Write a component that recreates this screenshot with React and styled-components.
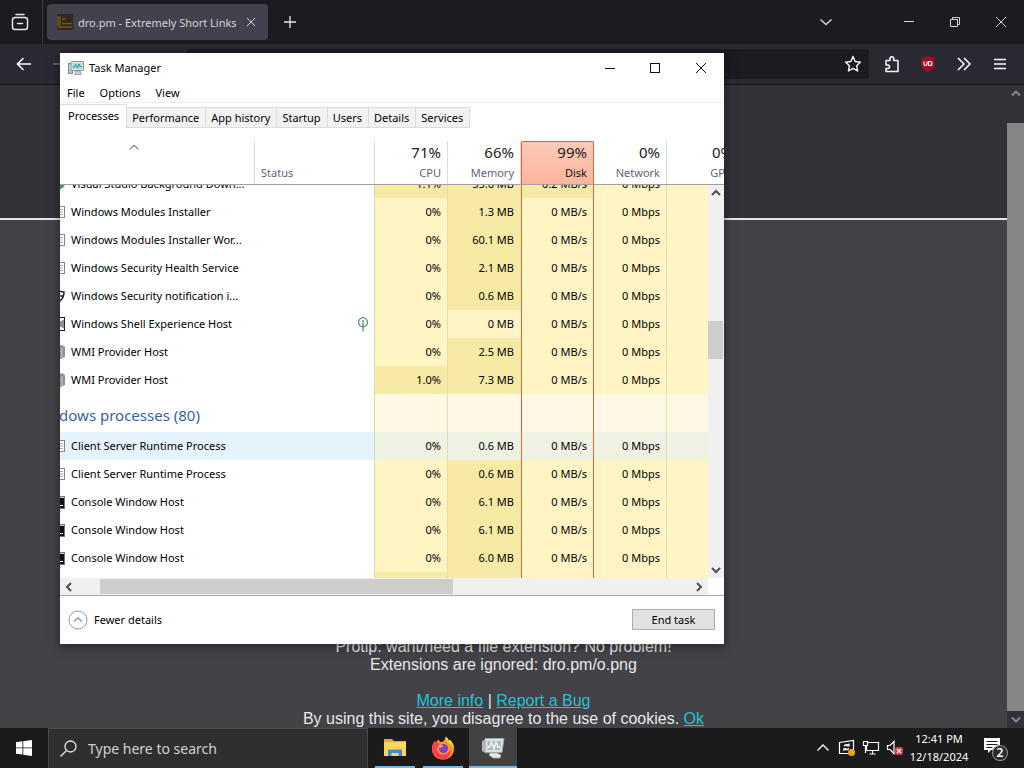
import React, { useLayoutEffect, useRef } from "react";
import styled, { createGlobalStyle, css } from "styled-components";

const GlobalStyle = createGlobalStyle`
  * {
    box-sizing: border-box;
  }
  body {
    margin: 0;
    font-family: "Noto Sans", "Open Sans", sans-serif;
    font-size: 11px;
    background-color: #434247;
  }
  button {
    font: inherit;
    color: inherit;
    border: 0;
    padding: 0;
    background: none;
  }
`;

const SCROLL_LEFT = 30;
const SCROLL_TOP = 15;

const columns = [
  { key: "cpu", total: "71%", title: "CPU" },
  { key: "memory", total: "66%", title: "Memory" },
  { key: "disk", total: "99%", title: "Disk", hot: true },
  { key: "network", total: "0%", title: "Network" },
  { key: "gpu", total: "0%", title: "GPU" },
];

const appRows = [
  { name: "Visual Studio Background Down...", icon: "vs", cpu: "1.1%", memory: "55.6 MB", disk: "0.2 MB/s" },
  { name: "Windows Modules Installer", icon: "exe", memory: "1.3 MB" },
  { name: "Windows Modules Installer Wor...", icon: "exe", memory: "60.1 MB" },
  { name: "Windows Security Health Service", icon: "exe", memory: "2.1 MB" },
  { name: "Windows Security notification i...", icon: "shield", memory: "0.6 MB" },
  { name: "Windows Shell Experience Host", icon: "shell", memory: "0 MB", leaf: true },
  { name: "WMI Provider Host", icon: "wmi", memory: "2.5 MB" },
  { name: "WMI Provider Host", icon: "wmi", cpu: "1.0%", memory: "7.3 MB" },
];

const systemRows = [
  { name: "Client Server Runtime Process", icon: "exe", memory: "0.6 MB", hover: true },
  { name: "Client Server Runtime Process", icon: "exe", memory: "0.6 MB" },
  { name: "Console Window Host", icon: "console", memory: "6.1 MB" },
  { name: "Console Window Host", icon: "console", memory: "6.1 MB" },
  { name: "Console Window Host", icon: "console", memory: "6.0 MB" },
  { name: "Console Window Host", icon: "console", cpu: "0.1%", memory: "6.0 MB" },
];

const tabs = ["Processes", "Performance", "App history", "Startup", "Users", "Details", "Services"];

const Desktop = styled.div`
  position: relative;
  display: flex;
  flex-direction: column;
  min-height: 100vh;
  overflow: hidden;
`;

/* ---------- browser ---------- */

const Browser = styled.div`
  flex: 1;
  display: flex;
  flex-direction: column;
  color: #fbfbfe;
`;

const TabStrip = styled.div`
  display: flex;
  align-items: center;
  height: 44px;
  background-color: #1c1b22;
`;

const FirefoxView = styled.button`
  display: flex;
  align-items: center;
  justify-content: center;
  width: 43px;
  height: 44px;
  padding-right: 2px;
  border-right: 1px solid #3a3942;
`;

const BrowserTab = styled.div`
  display: flex;
  align-items: center;
  width: 221px;
  height: 36px;
  margin-left: 4px;
  padding: 0 10px;
  border-radius: 4px;
  background-color: #42414d;
  color: #d5d4da;
  svg {
    flex: none;
  }
  span {
    flex: 1;
    margin-left: 5px;
    white-space: nowrap;
  }
`;

const IconButton = styled.button`
  display: flex;
  align-items: center;
  justify-content: center;
  flex: none;
  width: ${(props) => props.$width || 36}px;
  height: 36px;
`;

const Spacer = styled.div`
  flex: 1;
`;

const ListTabsButton = styled(IconButton)`
  margin-right: 42px;
`;

const Toolbar = styled.div`
  display: flex;
  align-items: center;
  height: 41px;
  padding: 0 6px;
  background-color: #2b2a33;
  border-bottom: 1px solid #121117;
`;

const UrlBar = styled.div`
  flex: 1;
  display: flex;
  justify-content: flex-end;
  align-items: center;
  height: 30px;
  margin: 0 5px 0 108px;
  border-radius: 4px;
  background-color: #1c1b22;
`;

const Viewport = styled.div`
  flex: 1;
  display: flex;
`;

const WebPage = styled.main`
  flex: 1;
  display: flex;
  flex-direction: column;
  background-color: #434247;
  font-family: "Liberation Sans", Arial, sans-serif;
  font-size: 16px;
  line-height: 18px;
  color: #e8e8ea;
  text-align: center;
`;

const Hero = styled.header`
  height: 135px;
  background-color: #333238;
  border-bottom: 2px solid #e4e4e4;
`;

const PageFooter = styled.footer`
  margin-top: auto;
  p {
    margin: 0 0 18px;
  }
  p:last-child {
    margin: 0;
  }
  a {
    color: #22c3d6;
  }
`;

const PageScrollbar = styled.div`
  display: flex;
  flex-direction: column;
  align-items: center;
  width: 17px;
  background-color: #323137;
  svg {
    flex: none;
    height: 17px;
  }
`;

const PageThumb = styled.div`
  flex: 1;
  width: 100%;
  margin-top: 21px;
  background-color: #868686;
`;

/* ---------- task manager ---------- */

const Window = styled.section`
  position: absolute;
  left: 60px;
  top: 53px;
  width: 664px;
  display: flex;
  flex-direction: column;
  background-color: #fff;
  color: #000;
  box-shadow: 0 2px 10px rgba(0, 0, 0, 0.5);
`;

const TitleBar = styled.header`
  display: flex;
  align-items: center;
  height: 29px;
  padding-left: 8px;
  h1 {
    flex: 1;
    margin: 0 0 0 5px;
    font-size: 11px;
    font-weight: 400;
  }
`;

const MenuBar = styled.nav`
  display: flex;
  gap: 15px;
  height: 21px;
  padding-left: 7px;
  border-bottom: 1px solid #ececec;
`;

const TabList = styled.div`
  display: flex;
  align-items: flex-end;
  height: 25px;
  margin-bottom: 13px;
`;

const Tab = styled.button`
  height: 21px;
  padding: 0 6px 0 5px;
  border: 1px solid #dcdcdc;
  border-left: 0;
  background-color: #f2f2f2;
  white-space: nowrap;
  ${(props) =>
    props.$active &&
    css`
      height: 24px;
      padding: 0 7px 2px 8px;
      border-bottom: 0;
      background-color: #fff;
    `};
`;

const HeaderRow = styled.div`
  display: flex;
  height: 44px;
  border-bottom: 1px solid #a0a0a0;
  overflow: hidden;
`;

const HeaderCell = styled.button`
  flex: none;
  display: flex;
  flex-direction: column;
  justify-content: space-between;
  align-items: flex-end;
  width: 73px;
  padding: 1px 6px 2px 0;
  border-right: 1px solid #dcdcdc;
  color: #5c6478;
  line-height: 18px;
  strong {
    font-size: 15px;
    line-height: 20px;
    font-weight: 400;
    color: #222;
  }
  ${(props) =>
    props.$hot &&
    css`
      padding-top: 0;
      border: 1px solid #d9653c;
      border-bottom: 0;
      border-radius: 2px 2px 0 0;
      background: linear-gradient(#fbcab8, #ffb49b);
      color: #111;
    `};
`;

const NameHeader = styled(HeaderCell)`
  width: 225px;
  padding: 0 17px 0 0;
  align-items: center;
`;

const StatusHeader = styled(HeaderCell)`
  width: 120px;
  padding-left: 6px;
  align-items: flex-start;
  justify-content: flex-end;
`;

const ListArea = styled.div`
  display: flex;
  height: 393px;
`;

const ListScroller = styled.div`
  flex: 1;
  min-width: 0;
  overflow: hidden;
`;

const ProcessTable = styled.table`
  width: 1010px;
  table-layout: fixed;
  border-collapse: separate;
  border-spacing: 0;
  th,
  td {
    padding: 0;
    font-weight: 400;
    white-space: nowrap;
  }
`;

const ProcessRow = styled.tr`
  height: 28px;
  line-height: 16px;
  background-color: ${(props) => (props.$hover ? "#e5f3fc" : "#fff")};
`;

const NameCell = styled.th`
  text-align: left;
  div {
    display: flex;
    align-items: center;
    gap: 5px;
    padding-left: 20px;
  }
  svg {
    flex: none;
  }
`;

const StatusCell = styled.td`
  border-right: 1px solid #ddd9b0;
  svg {
    display: block;
    margin: 0 4px 0 auto;
  }
`;

const shades = { none: "#fff4c4", low: "#f7eaa4", group: "#fff8e4", hover: "#eef2e3" };

const ValueCell = styled.td`
  text-align: right;
  background-color: ${(props) => shades[props.$shade]};
  border-right: ${(props) => (props.$plain ? "0" : "1px solid #e3dcab")};
  && {
    padding-right: ${(props) => (props.$plain ? "7px" : "6px")};
  }
  ${(props) =>
    props.$hot &&
    css`
      border-left: 1px solid #d9653c;
      border-right: 1px solid #d9653c;
    `};
`;

const GroupName = styled.th`
  height: 38px;
  text-align: left;
  font-size: 15px;
  color: #3563a5;
`;

const GroupLabel = styled.span`
  display: block;
  padding: 4px 0 0 2px;
`;

const ScrollTrack = styled.div`
  display: flex;
  align-items: center;
  background-color: #f0f0f0;
  ${(props) =>
    props.$vertical
      ? css`
          flex-direction: column;
          align-items: flex-start;
          width: 16px;
        `
      : css`
          height: 17px;
          margin-right: 16px;
        `};
  svg {
    flex: none;
  }
`;

const VerticalThumb = styled.div`
  width: 15px;
  height: 38px;
  margin: 120px 0 auto;
  background-color: #cdcdcd;
`;

const HorizontalThumb = styled.div`
  width: 353px;
  height: 15px;
  margin: 0 auto 0 24px;
  background-color: #cdcdcd;
`;

const WindowFooter = styled.footer`
  display: flex;
  align-items: center;
  justify-content: space-between;
  height: 49px;
  padding: 0 9px 1px 8px;
  border-top: 1px solid #a8a8a8;
`;

const FewerDetails = styled.button`
  display: flex;
  align-items: center;
  gap: 6px;
`;

const EndTask = styled.button`
  width: 83px;
  height: 21px;
  border: 1px solid #adadad;
  background-color: #e1e1e1;
`;

/* ---------- taskbar ---------- */

const Taskbar = styled.footer`
  display: flex;
  align-items: stretch;
  height: 40px;
  background-color: #1b1b1b;
  color: #fff;
`;

const StartButton = styled(IconButton)`
  height: 40px;
`;

const SearchBox = styled.label`
  display: flex;
  align-items: center;
  gap: 11px;
  width: 320px;
  padding-left: 11px;
  border: 1px solid #4a4a4a;
  border-bottom: 0;
  background-color: #2f2f2f;
  input {
    flex: 1;
    min-width: 0;
    padding: 0;
    border: 0;
    outline: 0;
    background: none;
    font: inherit;
    font-size: 14px;
    color: #fff;
  }
  input::placeholder {
    color: #d0d0d0;
    opacity: 1;
  }
`;

const AppButton = styled.button`
  display: flex;
  align-items: center;
  justify-content: center;
  width: 48px;
  margin-left: ${(props) => (props.$active ? "2px" : "0")};
  background-color: ${(props) => (props.$active ? "#424242" : "transparent")};
  background-image: linear-gradient(#76b9ed, #76b9ed);
  background-size: ${(props) => (props.$active ? "48px" : "40px")} 2px;
  background-position: bottom center;
  background-repeat: no-repeat;
`;

const AppButtons = styled.div`
  display: flex;
  margin-left: 3px;
`;

const Tray = styled.div`
  display: flex;
  align-items: center;
  margin-left: auto;
  padding-right: 14px;
`;

const Clock = styled.time`
  width: 62px;
  margin: 0 12px 0 1px;
  text-align: center;
  line-height: 18px;
  white-space: nowrap;
`;

const Chevron = ({ d, color = "#505050", size = 16, weight = 2 }) => (
  <svg width={size} height={size} viewBox="0 0 16 16" fill="none" stroke={color} strokeWidth={weight}>
    <path d={d} />
  </svg>
);

const UP = "M4 10l4-4 4 4";
const DOWN = "M4 6l4 4 4-4";

const TaskManagerIcon = ({ size = 16 }) => (
  <svg width={size} height={size} viewBox="0 0 16 16">
    <rect x="0.5" y="3.5" width="4" height="10" fill="#b9c4c8" stroke="#7d8b90" />
    <path d="M1.5 6h2M1.5 8h2" stroke="#fff" />
    <rect x="3" y="1.5" width="12.5" height="9" rx="0.5" fill="#dfe6e8" stroke="#84959b" />
    <rect x="4.5" y="3" width="9.5" height="6" fill="#a9dbe0" />
    <path d="M4.5 7h2l1.3-2.5L9.5 8l1.5-4 1 2.5h2" fill="none" stroke="#2f8794" strokeWidth="0.9" />
    <path d="M8 11h4l1.5 3.5h-7z" fill="#cbd3d6" stroke="#84959b" strokeWidth="0.7" />
  </svg>
);

const TaskManagerTile = () => (
  <svg width="24" height="24" viewBox="0 0 24 24">
    <path d="M1 5l5-2v15l-5-3z" fill="#b4babc" />
    <path d="M4 2.500h19l-2 14H4z" fill="#dfe2e3" stroke="#9da4a6" />
    <path d="M6.500 5h14l-1.500 9H6.500z" fill="#aebcbf" />
    <path d="M6.500 11h2l2-5 2.500 7 2-7 2 5h2" fill="none" stroke="#f4f7f7" strokeWidth="1.300" />
    <path d="M9 17h7l4 2-1 3h-7l-4-3z" fill="#e4e6e7" stroke="#a4a9ab" strokeWidth="0.700" />
  </svg>
);

const ProcessIcon = ({ type }) => (
  <svg width="16" height="16" viewBox="0 0 16 16">
    {type === "vs" && <path d="M8 1c5 0 7 2 7 6s-3 6-7 7z" fill="#33a579" />}
    {type === "exe" && (
      <>
        <rect x="1.5" y="2.5" width="13" height="11" fill="#fff" stroke="#858585" />
        <path d="M9 5.500h4M9 8h4M9 10.500h4" stroke="#a6a6a6" />
      </>
    )}
    {type === "shield" && (
      <path d="M2 4q4 0 6-2 2 2 6 2 0 7-6 10-6-3-6-10zM8 2v12M2 8h12" fill="none" stroke="#222" strokeWidth="1.500" />
    )}
    {type === "shell" && (
      <>
        <rect x="1.500" y="1.500" width="13" height="13" fill="#fff" stroke="#222" />
        <path d="M11 5v6M13 4v8" stroke="#222" />
      </>
    )}
    {type === "wmi" && (
      <>
        <path d="M6 3l6-2 3 2v10l-4 2-5-2z" fill="#8d9191" />
        <path d="M12 4v10M6 6l5 2" stroke="#c9cccc" />
      </>
    )}
    {type === "console" && (
      <>
        <rect x="1.500" y="2.500" width="13" height="12" fill="#111" stroke="#777" />
        <path d="M2 3.500h12" stroke="#ccc" />
        <path d="M10 11.500h3" stroke="#fff" />
      </>
    )}
  </svg>
);

const LeafIcon = () => (
  <svg width="14" height="16" viewBox="0 0 14 16" fill="none" stroke="#3f8f5c" strokeWidth="1.2">
    <path d="M7 1.500C4.500 2 2.600 4 2.600 6.500S4.500 10.800 7 10.800s4.400-1.800 4.400-4.300S9.500 2 7 1.500zM7 4v11.500" />
  </svg>
);

const FirefoxIcon = () => (
  <svg width="24" height="24" viewBox="0 0 24 24">
    <path d="M12 23.500C5.500 23.500 1 19 1 12.800c0-3.600 1.500-6 3-7.800l.8 2.500C5.500 5.500 7 4 8 3.500c0 1 .3 1.700 1 2.500 2 0 3-.3 4-1.200C14 3.800 14 2 14.800.5c1.400 1 2.600 3 3.200 4.500l1-1c2.500 2.300 4 5.300 4 8.800 0 6.200-4.500 10.700-11 10.700z" fill="#ff9a1f" />
    <path d="M14.800.5c1.400 1 2.600 3 3.200 4.500l1-1c2.500 2.300 4 5.300 4 8.500-1.500-3-3-4-5-5.500-2.200-1.600-3.400-4-3.200-6.500z" fill="#ffd83d" />
    <path d="M1 12.800c0-3.600 1.500-6 3-7.800l.8 2.500C7 6 9 7 9 9c-2 1-3.500 3-2.500 6s5 4.500 8.500 3c2.500-1 4-3 4.500-5.500 1 4-1 11-7.500 11S1 19 1 12.800z" fill="#ff3d52" />
    <circle cx="12.500" cy="12.500" r="4.600" fill="#7a3fd0" />
    <path d="M7.500 9.500c2-.8 4-.3 5 1-1.700 0-2.500.8-3.500 1.500-1 .5-1.500-1-1.500-2.500z" fill="#ffb02e" />
  </svg>
);

const Process = ({ row }) => {
  const values = {
    cpu: row.cpu || "0%",
    memory: row.memory,
    disk: row.disk || "0 MB/s",
    network: "0 Mbps",
    gpu: "",
  };
  const isLow = (key) =>
    (key === "cpu" && row.cpu) || (key === "memory" && row.memory !== "0 MB") || (key === "disk" && row.disk);
  return (
    <ProcessRow $hover={row.hover}>
      <NameCell scope="row">
        <div>
          <ProcessIcon type={row.icon} />
          {row.name}
        </div>
      </NameCell>
      <StatusCell>{row.leaf && <LeafIcon />}</StatusCell>
      {columns.map((col) => (
        <ValueCell
          key={col.key}
          $hot={col.hot}
          $plain={col.key === "memory"}
          $shade={row.hover ? "hover" : isLow(col.key) ? "low" : "none"}
        >
          {values[col.key]}
        </ValueCell>
      ))}
      <td />
    </ProcessRow>
  );
};

const TaskManager = () => {
  const headRef = useRef(null);
  const listRef = useRef(null);

  // the header has no scrollbar of its own, keep it aligned with the list
  useLayoutEffect(() => {
    headRef.current.scrollLeft = SCROLL_LEFT;
    listRef.current.scrollLeft = SCROLL_LEFT;
    listRef.current.scrollTop = SCROLL_TOP;
  }, []);

  return (
    <Window>
      <TitleBar>
        <TaskManagerIcon />
        <h1>Task Manager</h1>
        <IconButton $width={45} aria-label="Minimize">
          <svg width="12" height="12" viewBox="0 0 12 12" stroke="#111">
            <path d="M1 6.500h10" />
          </svg>
        </IconButton>
        <IconButton $width={46} aria-label="Maximize">
          <svg width="12" height="12" viewBox="0 0 12 12" stroke="#111" fill="none">
            <rect x="1.500" y="1.500" width="9" height="9" />
          </svg>
        </IconButton>
        <IconButton $width={46} aria-label="Close">
          <svg width="12" height="12" viewBox="0 0 12 12" stroke="#111">
            <path d="M1 1l10 10M11 1L1 11" />
          </svg>
        </IconButton>
      </TitleBar>
      <MenuBar>
        <button>File</button>
        <button>Options</button>
        <button>View</button>
      </MenuBar>
      <TabList role="tablist">
        {tabs.map((tab, index) => (
          <Tab key={tab} role="tab" aria-selected={index === 0} $active={index === 0}>
            {tab}
          </Tab>
        ))}
      </TabList>
      <HeaderRow ref={headRef}>
        <NameHeader aria-label="Name">
          <Chevron d="M3 9.500L8 5l5 4.500" size={14} weight={1.3} color="#777" />
        </NameHeader>
        <StatusHeader>Status</StatusHeader>
        {columns.map((col) => (
          <HeaderCell key={col.key} $hot={col.hot}>
            <strong>{col.total}</strong>
            {col.title}
          </HeaderCell>
        ))}
      </HeaderRow>
      <ListArea>
        <ListScroller ref={listRef}>
          <ProcessTable>
            <colgroup>
              <col style={{ width: 225 }} />
              <col style={{ width: 120 }} />
              {columns.map((col) => (
                <col key={col.key} style={{ width: 73 }} />
              ))}
              <col />
            </colgroup>
            <tbody>
              {appRows.map((row, index) => (
                <Process key={index} row={row} />
              ))}
              <tr>
                <GroupName scope="rowgroup">
                  <GroupLabel>Windows processes (80)</GroupLabel>
                </GroupName>
                <StatusCell />
                {columns.map((col) => (
                  <ValueCell key={col.key} $hot={col.hot} $plain={col.key === "memory"} $shade="group" />
                ))}
                <td />
              </tr>
              {systemRows.map((row, index) => (
                <Process key={index} row={row} />
              ))}
            </tbody>
          </ProcessTable>
        </ListScroller>
        <ScrollTrack $vertical>
          <Chevron d={UP} />
          <VerticalThumb />
          <Chevron d={DOWN} />
        </ScrollTrack>
      </ListArea>
      <ScrollTrack>
        <Chevron d="M11 4L7 8l4 4" />
        <HorizontalThumb />
        <Chevron d="M5 4l4 4-4 4" />
      </ScrollTrack>
      <WindowFooter>
        <FewerDetails>
          <svg width="20" height="20" viewBox="0 0 20 20" fill="none" stroke="#999">
            <circle cx="10" cy="10" r="9" />
            <path d="M6 11.500l4-3.500 4 3.500" strokeWidth="1.500" />
          </svg>
          Fewer details
        </FewerDetails>
        <EndTask>End task</EndTask>
      </WindowFooter>
    </Window>
  );
};

const App = () => {
  return (
    <Desktop>
      <GlobalStyle />
      <Browser>
        <TabStrip>
          <FirefoxView aria-label="Firefox View">
            <svg width="18" height="18" viewBox="0 0 18 18" fill="none" stroke="#e6e6ea" strokeWidth="1.500" strokeLinecap="round">
              <path d="M5 1.500h8" />
              <rect x="1.500" y="4.500" width="15" height="12" rx="2.500" />
              <path d="M6.500 10.500h5" />
            </svg>
          </FirefoxView>
          <BrowserTab>
            <svg width="16" height="16" viewBox="0 0 16 16">
              <rect width="16" height="16" fill="#33291f" />
              <path d="M1 3h2v8H1zM1 13h14M5 9.500h10M5 5h4" stroke="#6b5518" fill="none" strokeWidth="1.500" />
            </svg>
            <span>dro.pm - Extremely Short Links</span>
            <svg width="14" height="14" viewBox="0 0 14 14" stroke="#d5d4da">
              <path d="M3 3l8 8M11 3l-8 8" />
            </svg>
          </BrowserTab>
          <IconButton $width={44} aria-label="New tab">
            <svg width="14" height="14" viewBox="0 0 14 14" stroke="#e6e6ea" strokeWidth="1.300">
              <path d="M7 1v12M1 7h12" />
            </svg>
          </IconButton>
          <Spacer />
          <ListTabsButton aria-label="List all tabs">
            <Chevron d="M2.500 5.500L8 10.500l5.500-5" color="#d5d4da" weight={1.5} />
          </ListTabsButton>
          <IconButton $width={46} aria-label="Minimize">
            <svg width="12" height="12" viewBox="0 0 12 12" stroke="#d5d4da">
              <path d="M1 5.500h10" />
            </svg>
          </IconButton>
          <IconButton $width={46} aria-label="Restore">
            <svg width="12" height="12" viewBox="0 0 12 12" stroke="#d5d4da" fill="none">
              <path d="M1.500 3.500h7v7h-7zM3.500 3.500v-2h7v7h-2" />
            </svg>
          </IconButton>
          <IconButton $width={46} aria-label="Close">
            <svg width="12" height="12" viewBox="0 0 12 12" stroke="#d5d4da">
              <path d="M1 1l10 10M11 1L1 11" />
            </svg>
          </IconButton>
        </TabStrip>
        <Toolbar>
          <IconButton aria-label="Back">
            <svg width="16" height="16" viewBox="0 0 16 16" fill="none" stroke="#fbfbfe" strokeWidth="1.600" strokeLinecap="round">
              <path d="M14.500 8H1.500M7 2.500L1.500 8 7 13.500" />
            </svg>
          </IconButton>
          <IconButton aria-label="Forward">
            <svg width="16" height="16" viewBox="0 0 16 16" fill="none" stroke="#77767e" strokeWidth="1.500">
              <path d="M1 8h13.500M9 2l6 6-6 6" />
            </svg>
          </IconButton>
          <UrlBar>
            <IconButton $width={32} aria-label="Bookmark">
              <svg width="18" height="18" viewBox="0 0 18 18" fill="none" stroke="#fbfbfe" strokeWidth="1.400" strokeLinejoin="round">
                <path d="M9 1.500l2.200 5 5.300.6-3.900 3.600 1 5.300L9 13.400 4.400 16l1-5.300L1.500 7.100l5.300-.6z" />
              </svg>
            </IconButton>
          </UrlBar>
          <IconButton aria-label="Extensions">
            <svg width="18" height="18" viewBox="0 0 18 18" fill="none" stroke="#fbfbfe" strokeWidth="1.500" strokeLinejoin="round">
              <path d="M3 8V5.500h4V3.700a1.800 1.800 0 0 1 3.700 0v1.800H15v11H3v-3h1.800a1.700 1.700 0 0 0 0-3.500H3z" />
            </svg>
          </IconButton>
          <IconButton aria-label="uBlock Origin">
            <svg width="16" height="16" viewBox="0 0 16 16">
              <path d="M8 0l6.500 2.500V8c0 4-3 6.500-6.500 8C4.500 14.500 1.500 12 1.500 8V2.500z" fill="#a30f1e" />
              <path d="M4 5.500v2.500q0 1.500 1.500 1.500T7 8V5.500M8.500 5.500v4h1.500q2 0 2-2t-2-2z" fill="none" stroke="#fff" strokeWidth="1.100" />
            </svg>
          </IconButton>
          <IconButton aria-label="More tools">
            <svg width="16" height="16" viewBox="0 0 16 16" fill="none" stroke="#fbfbfe" strokeWidth="1.500">
              <path d="M2 2l6 6-6 6M8 2l6 6-6 6" />
            </svg>
          </IconButton>
          <IconButton aria-label="Menu">
            <svg width="14" height="14" viewBox="0 0 14 14" stroke="#fbfbfe" strokeWidth="1.500">
              <path d="M1 2.500h12M1 7h12M1 11.500h12" />
            </svg>
          </IconButton>
        </Toolbar>
        <Viewport>
          <WebPage>
            <Hero />
            <PageFooter>
              <p>
                Protip: want/need a file extension? No problem!
                <br />
                Extensions are ignored: dro.pm/o.png
              </p>
              <p>
                <a href="#info">More info</a> | <a href="#bug">Report a Bug</a>
                <br />
                By using this site, you disagree to the use of cookies. <a href="#ok">Ok</a>
              </p>
            </PageFooter>
          </WebPage>
          <PageScrollbar>
            <Chevron d={UP} color="#85848a" />
            <PageThumb />
            <Chevron d={DOWN} color="#85848a" />
          </PageScrollbar>
        </Viewport>
      </Browser>

      <TaskManager />

      <Taskbar>
        <StartButton $width={48} aria-label="Start">
          <svg width="16" height="16" viewBox="0 0 16 16" fill="#fff">
            <path d="M0 2.200l6.500-.9v6.200H0zM7.300 1.200L16 0v7.500H7.300zM0 8.300h6.500v6.300L0 13.700zM7.300 8.300H16V16l-8.700-1.200z" />
          </svg>
        </StartButton>
        <SearchBox>
          <svg width="17" height="17" viewBox="0 0 17 17" fill="none" stroke="#e8e8e8" strokeWidth="1.300">
            <circle cx="10.500" cy="6.500" r="5.500" />
            <path d="M6.500 10.500L.5 16.500" />
          </svg>
          <input type="text" placeholder="Type here to search" aria-label="Search" />
        </SearchBox>
        <AppButtons>
          <AppButton aria-label="File Explorer">
            <svg width="24" height="24" viewBox="0 0 24 24">
              <path d="M1 3h8l2 2h12v4H1z" fill="#e8a33a" />
              <rect x="1" y="6" width="22" height="14" fill="#fbd75b" />
              <path d="M5 20v-6.500h14V20h-3.500v-3h-7v3z" fill="#3f8fd0" />
            </svg>
          </AppButton>
          <AppButton aria-label="Firefox">
            <FirefoxIcon />
          </AppButton>
          <AppButton $active aria-label="Task Manager">
            <TaskManagerTile />
          </AppButton>
        </AppButtons>
        <Tray>
          <IconButton $width={24} aria-label="Show hidden icons">
            <Chevron d="M2.500 10.500L8 5l5.500 5.500" color="#fff" weight={1.3} />
          </IconButton>
          <IconButton $width={24} aria-label="Updates">
            <svg width="18" height="18" viewBox="0 0 18 18" fill="none" stroke="#fff" strokeWidth="1.200">
              <path d="M1.500 3.500l14-2v13h-14z" />
              <path d="M6 7q2.500-2.500 5 0M11 4.500V7H8.500M11 9.500q-2.500 2.500-5 0M6 12V9.500h2.500" />
              <circle cx="13.500" cy="13.500" r="3.500" fill="#f3a11d" stroke="none" />
            </svg>
          </IconButton>
          <IconButton $width={24} aria-label="Network">
            <svg width="18" height="18" viewBox="0 0 18 18" fill="none" stroke="#fff" strokeWidth="1.200">
              <path d="M6 3.500h10.500v8H4.500V7M10.500 11.500v3M7.500 15h6" />
              <path d="M1.500 2.500h4v4h-4zM3.500 6.500V14" />
            </svg>
          </IconButton>
          <IconButton $width={24} aria-label="Volume muted">
            <svg width="18" height="18" viewBox="0 0 18 18" fill="none" stroke="#fff" strokeWidth="1.200">
              <path d="M1.500 6.500H4l4-4v12l-4-4H1.500z" />
              <rect x="9" y="8" width="8" height="8" rx="2" fill="#d8344c" stroke="none" />
              <path d="M11 10l4 4M15 10l-4 4" />
            </svg>
          </IconButton>
          <Clock>
            12:41 PM
            <br />
            12/18/2024
          </Clock>
          <IconButton $width={28} aria-label="2 notifications">
            <svg width="26" height="26" viewBox="0 0 26 26">
              <path d="M1 3h16v12H8l-3 3v-3H1z" fill="#fff" />
              <path d="M3.500 6.500h11M3.500 9.500h11M3.500 12.500h6" stroke="#1b1b1b" />
              <circle cx="17" cy="18" r="7.500" fill="#2b2b2b" stroke="#8a8a8a" strokeWidth="1.200" />
              <text x="17" y="22" fontSize="12" fontWeight="600" textAnchor="middle" fill="#fff">2</text>
            </svg>
          </IconButton>
        </Tray>
      </Taskbar>
    </Desktop>
  );
};

export default App;
